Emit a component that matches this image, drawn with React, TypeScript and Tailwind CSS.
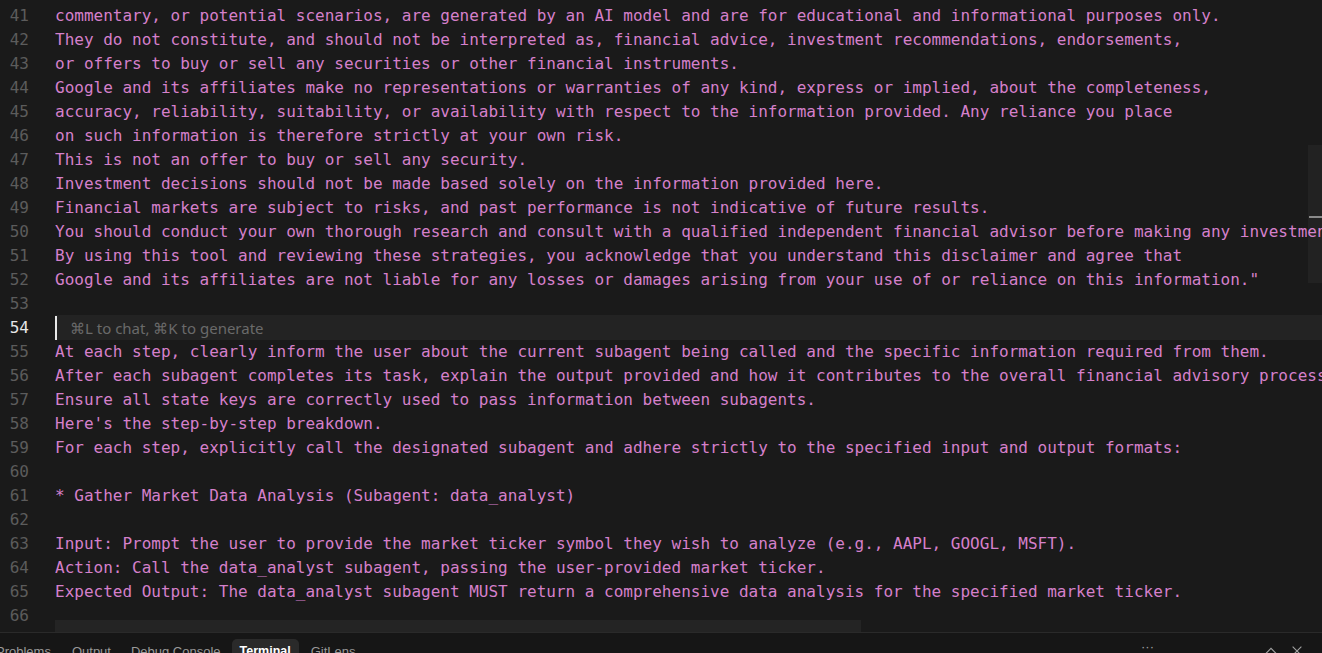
import React from "react";

const lines: [number, string][] = [
  [40, "The information and trading strategy outlines provided by this tool, including any analysis,"],
  [41, "commentary, or potential scenarios, are generated by an AI model and are for educational and informational purposes only."],
  [42, "They do not constitute, and should not be interpreted as, financial advice, investment recommendations, endorsements,"],
  [43, "or offers to buy or sell any securities or other financial instruments."],
  [44, "Google and its affiliates make no representations or warranties of any kind, express or implied, about the completeness,"],
  [45, "accuracy, reliability, suitability, or availability with respect to the information provided. Any reliance you place"],
  [46, "on such information is therefore strictly at your own risk."],
  [47, "This is not an offer to buy or sell any security."],
  [48, "Investment decisions should not be made based solely on the information provided here."],
  [49, "Financial markets are subject to risks, and past performance is not indicative of future results."],
  [50, "You should conduct your own thorough research and consult with a qualified independent financial advisor before making any investment decisions."],
  [51, "By using this tool and reviewing these strategies, you acknowledge that you understand this disclaimer and agree that"],
  [52, "Google and its affiliates are not liable for any losses or damages arising from your use of or reliance on this information.\""],
  [53, ""],
  [54, "__CURSOR__"],
  [55, "At each step, clearly inform the user about the current subagent being called and the specific information required from them."],
  [56, "After each subagent completes its task, explain the output provided and how it contributes to the overall financial advisory process."],
  [57, "Ensure all state keys are correctly used to pass information between subagents."],
  [58, "Here's the step-by-step breakdown."],
  [59, "For each step, explicitly call the designated subagent and adhere strictly to the specified input and output formats:"],
  [60, ""],
  [61, "* Gather Market Data Analysis (Subagent: data_analyst)"],
  [62, ""],
  [63, "Input: Prompt the user to provide the market ticker symbol they wish to analyze (e.g., AAPL, GOOGL, MSFT)."],
  [64, "Action: Call the data_analyst subagent, passing the user-provided market ticker."],
  [65, "Expected Output: The data_analyst subagent MUST return a comprehensive data analysis for the specified market ticker."],
  [66, ""],
];

export default function App() {
  return (
    <div className="w-[1322px] h-[653px] bg-[#1a1a1a] flex flex-col overflow-hidden">
      <div className="relative h-[632px] overflow-hidden">
        <div
          className="flex flex-col mt-[-20px] text-[16px] leading-[24px]"
          style={{ fontFamily: '"DejaVu Sans Mono", monospace' }}
        >
          {lines.map(([n, t]) => {
            const cur = t === "__CURSOR__";
            return (
              <div key={n} className="flex h-[24px] shrink-0">
                <div
                  className={`w-[29px] text-right shrink-0 ${cur ? "text-[#e6e6e6]" : "text-[#5c5c5c]"}`}
                >
                  {n}
                </div>
                <div className="w-[26px] shrink-0" />
                {cur ? (
                  <div className="flex-1 flex items-center bg-[#232323] mt-[-1px]">
                    <div className="w-[2px] h-[24px] bg-[#e8e8e8]" />
                    <span
                      className="ml-[13px] text-[15px] text-[#6a6a6a]"
                      style={{ fontFamily: '"Noto Sans", sans-serif' }}
                    >
                      ⌘L to chat, ⌘K to generate
                    </span>
                  </div>
                ) : (
                  <div className="flex-1 whitespace-pre text-[#d580cb] overflow-hidden">{t}</div>
                )}
              </div>
            );
          })}
        </div>
        {/* horizontal scrollbar */}
        <div className="absolute left-[55px] top-[620px] w-[806px] h-[12px] bg-[#242424]" />
        {/* vertical scrollbar slider */}
        <div className="absolute right-0 top-[145px] w-[14px] h-[138px] bg-[#ffffff]/[0.04]" />
        <div className="absolute right-0 top-[216px] w-[13px] h-[2px] bg-[#8a8a8a]" />
      </div>
      <div
        className="relative h-[21px] border-t border-[#2a2a2a] bg-[#161616] flex items-start text-[13px] text-[#9a9a9a]"
        style={{ fontFamily: '"Liberation Sans", Arial, sans-serif' }}
      >
        <div className="flex items-start pt-[6px] ml-[-4px]">
          <span className="pt-[3px]">Problems</span>
          <span className="ml-[21px] pt-[3px]">Output</span>
          <span className="ml-[20px] pt-[3px]">Debug Console</span>
          <span className="ml-[11px] px-[8px] pt-[3px] rounded-[5px] bg-[#2a2a2a] text-white font-bold text-[12.5px]">Terminal</span>
          <span className="ml-[12px] pt-[3px]">GitLens</span>
        </div>
        <div className="ml-auto flex items-start pt-[5px] pr-[18px] text-[#a0a0a0]">
          <span className="mr-[110px] leading-[14px] pt-[2px]">···</span>
          <svg width="14" height="14" viewBox="0 0 16 16" className="mr-[12px] mt-[6px]" fill="none" stroke="#a0a0a0" strokeWidth="1.3">
            <path d="M2 11 L8 5 L14 11" />
          </svg>
          <svg width="14" height="14" viewBox="0 0 16 16" className="mt-[6px]" fill="none" stroke="#a0a0a0" strokeWidth="1.3">
            <path d="M3 3 L13 13 M13 3 L3 13" />
          </svg>
        </div>
      </div>
    </div>
  );
}
